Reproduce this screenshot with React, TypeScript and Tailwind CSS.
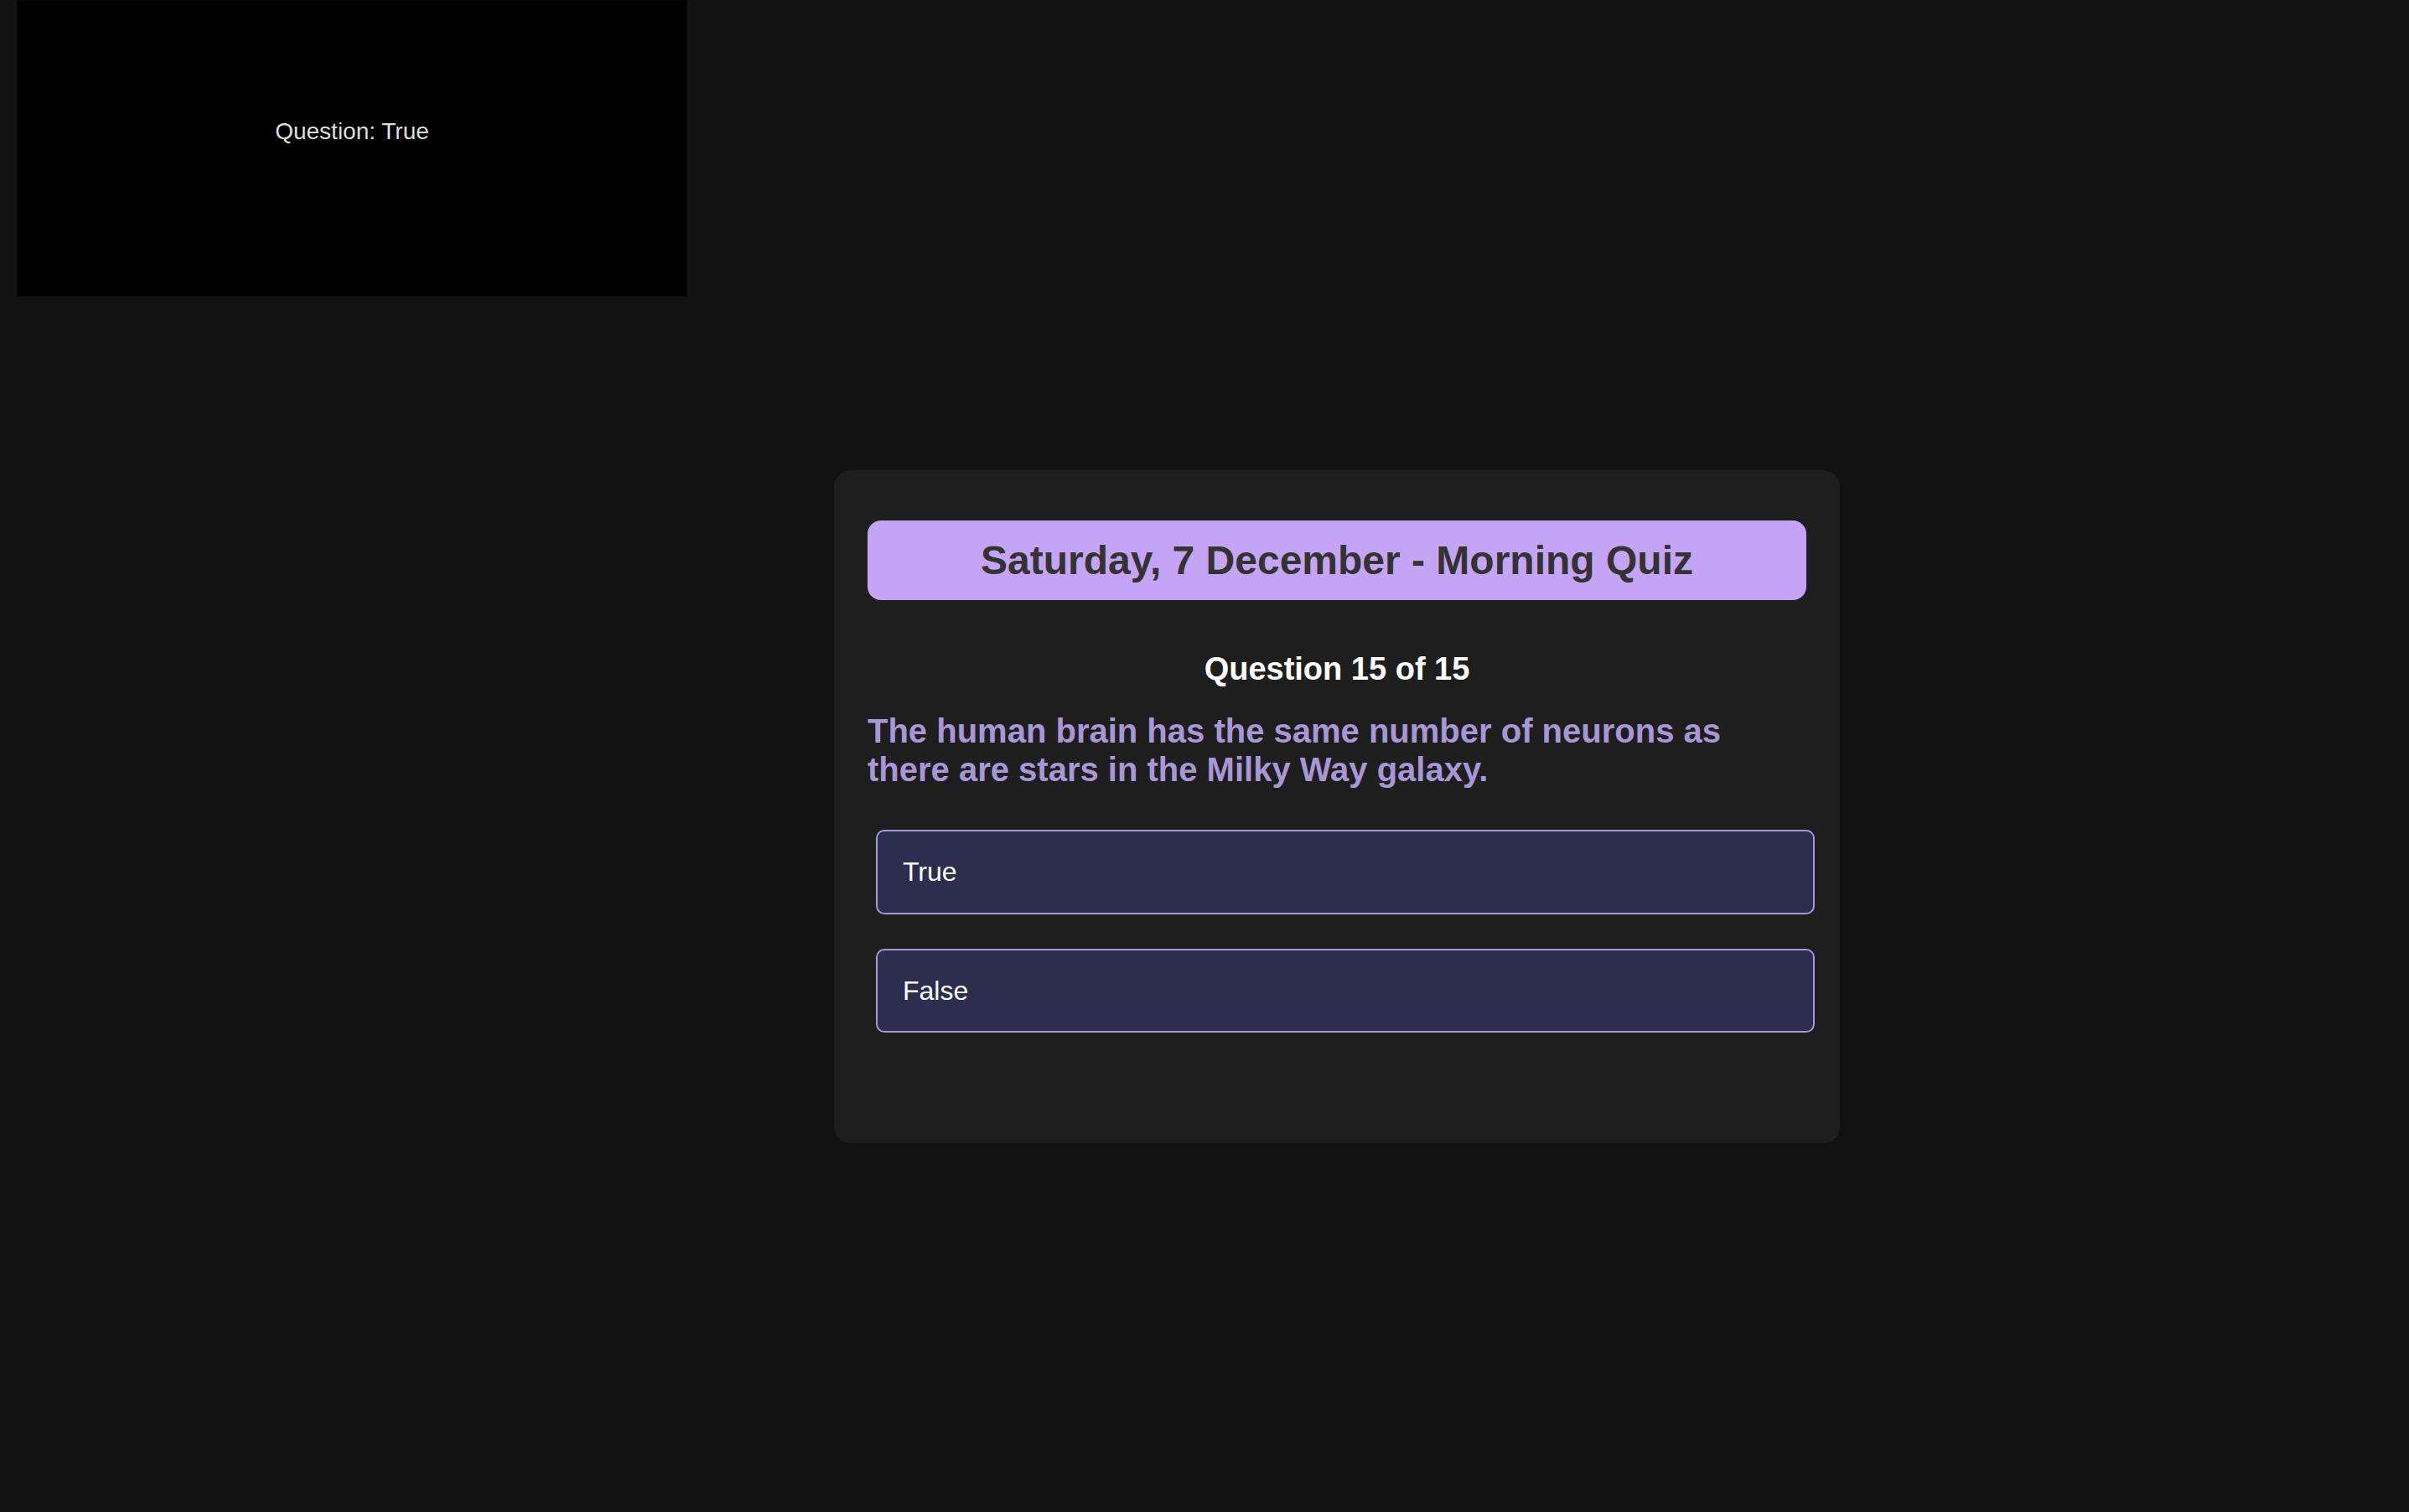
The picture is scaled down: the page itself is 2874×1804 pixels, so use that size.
const options = ["True", "False"]

export default function App() {
  return (
    <div
      className="relative min-h-screen w-full bg-[#121212]"
      style={{ fontFamily: '"Liberation Sans", Arial, Helvetica, sans-serif' }}
    >
      {/* floating preview */}
      <div className="absolute left-[20px] top-0 flex h-[354px] w-[800px] justify-center border border-[#070707] bg-black pt-[140px]">
        <span className="text-[28px] leading-[1.15] text-[#dedede]">Question: True</span>
      </div>

      <div className="flex min-h-screen justify-center pl-[316px] pt-[561px]">
        <div className="h-fit w-[1200px] rounded-[20px] bg-[#1e1e1e] px-[40px] pb-[132px] pt-[60px]">
          <h1 className="rounded-[16px] bg-[#c5a3f5] py-[20px] text-center text-[48px] font-bold leading-[1.15] text-[#333333]">
            Saturday, 7 December - Morning Quiz
          </h1>

          <h3 className="mt-[61px] text-center text-[38px] font-bold leading-[1.15] text-white">
            Question 15 of 15
          </h3>

          <p className="mt-[28px] text-[40px] font-bold leading-[1.15] text-[#a896d6]">
            The human brain has the same number of neurons as
            <br />
            there are stars in the Milky Way galaxy.
          </p>

          <div className="mt-[49px] flex flex-col gap-[41px]">
            {options.map((opt) => (
              <button
                key={opt}
                className="ml-[10px] w-full rounded-[10px] border-2 border-[#a896d6] bg-[#2d2d50] px-[30px] py-[30px] text-left text-[32px] leading-[1.15] text-white"
              >
                {opt}
              </button>
            ))}
          </div>
        </div>
      </div>
    </div>
  )
}
